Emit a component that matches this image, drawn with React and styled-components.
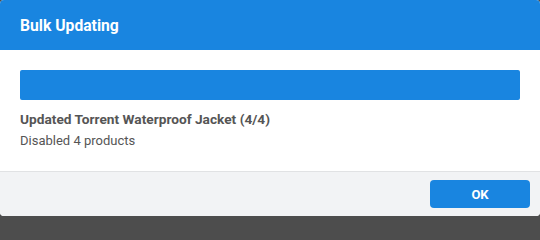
import React from 'react'
import styled, { createGlobalStyle } from 'styled-components'

const GlobalStyle = createGlobalStyle`
    html, body {
        margin: 0;
        padding: 0;
        background: #4d4d4d;
    }
    body {
        font-family: Roboto, "Liberation Sans", Arial, sans-serif;
    }
`;

function App() {
    return (
        <>
            <GlobalStyle />
            <DialogStyled>
                <div className="header">
                    <h2>Bulk Updating</h2>
                </div>
                <div className="body">
                    <ProgressBar value={100} />
                    <p className="status">Updated Torrent Waterproof Jacket (4/4)</p>
                    <p className="summary">Disabled 4 products</p>
                </div>
                <div className="footer">
                    <button type="button">OK</button>
                </div>
            </DialogStyled>
        </>
    )
}

function ProgressBar({ value }) {
    return (
        <BarTrack>
            <BarFill style={{ width: `${value}%` }} />
        </BarTrack>
    )
}

const DialogStyled = styled.div`
    width: 540px;
    height: 216px;
    background: #fff;
    border-radius: 4px;
    overflow: hidden;
    display: flex;
    flex-direction: column;

    .header {
        height: 50px;
        flex-shrink: 0;
        background: #1985e0;
        display: flex;
        align-items: center;
        padding: 0 20px;
        h2 {
            margin: 0;
            color: #fff;
            font-size: 15.7px;
            font-weight: 700;
        }
    }

    .body {
        padding: 20px 20px 19px;
        border-bottom: 1px solid #e1e2e4;
        p {
            margin: 0;
            font-size: 13px;
            line-height: 22px;
            color: #555;
        }
        .status {
            font-size: 13.7px;
            font-weight: 700;
        }
    }

    .footer {
        flex: 1;
        background: #f2f3f5;
        display: flex;
        align-items: center;
        justify-content: flex-end;
        padding: 0 10px;
        button {
            width: 100px;
            height: 28px;
            border: none;
            border-radius: 4px;
            background: #1985e0;
            color: #fff;
            font-family: inherit;
            font-size: 13px;
            font-weight: 700;
            cursor: pointer;
        }
    }
`;

const BarTrack = styled.div`
    height: 30px;
    margin-bottom: 8px;
    border-radius: 2px;
    background: #e6e6e6;
    overflow: hidden;
`;

const BarFill = styled.div`
    height: 100%;
    background: #1985e0;
`;

export default App
